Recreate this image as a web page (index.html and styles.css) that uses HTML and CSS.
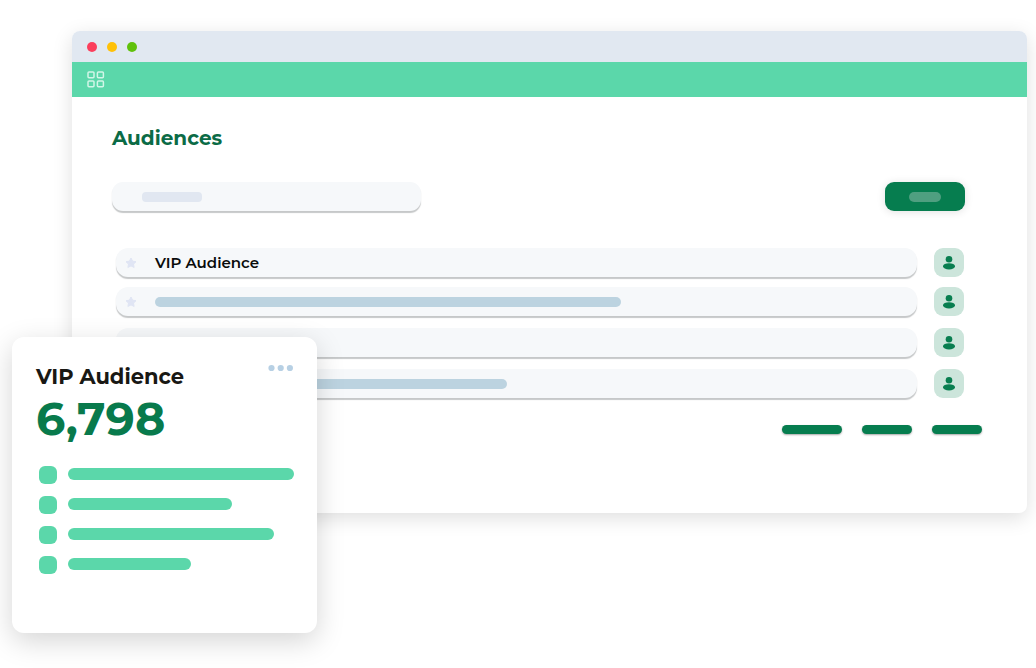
FILE: index.html
```html
<!DOCTYPE html>
<html lang="en">
<head>
<meta charset="utf-8">
<meta name="viewport" content="width=device-width, initial-scale=1">
<title>Audiences</title>
<link rel="stylesheet" href="styles.css">
</head>
<body>
<svg class="defs" aria-hidden="true">
  <symbol id="person" viewBox="0 0 14 16"><circle cx="7" cy="4.200" r="3.300"/><ellipse cx="7" cy="11.300" rx="6" ry="3.100"/></symbol>
  <symbol id="star" viewBox="0 0 12 12"><path d="M6 1 7.600 4.200l3.400.5-2.500 2.400.6 3.300L6 8.900l-3.100 1.500.6-3.300L1 4.700l3.400-.5z" stroke-linejoin="round"/></symbol>
</svg>
<main class="scene">
  <section class="window">
    <header class="titlebar">
      <span class="light light-close"></span>
      <span class="light light-min"></span>
      <span class="light light-max"></span>
    </header>
    <nav class="toolbar">
      <button class="icon-button" type="button" aria-label="Apps">
        <svg width="18" height="18" viewBox="0 0 18 18" fill="none" stroke="currentColor" stroke-width="1.500"><rect x="1" y="1" width="6" height="5.800" rx="1"/><rect x="10.400" y="1" width="6" height="5.800" rx="1"/><rect x="1" y="10" width="6" height="5.800" rx="1"/><rect x="10.400" y="10" width="6" height="5.800" rx="1"/></svg>
      </button>
    </nav>
    <div class="content">
      <h1 class="heading">Audiences</h1>
      <div class="actions">
        <label class="search"><span class="search-hint"></span><input class="search-input" type="text" aria-label="Search audiences"></label>
        <button class="create" type="button" aria-label="Create audience"><span class="create-label"></span></button>
      </div>
      <ul class="rows">
        <li class="row row-starred">
          <div class="row-body"><svg class="star"><use href="#star"/></svg><span class="row-name">VIP Audience</span></div>
          <button class="person" type="button" aria-label="Members"><svg class="person-icon"><use href="#person"/></svg></button>
        </li>
        <li class="row row-starred">
          <div class="row-body"><svg class="star"><use href="#star"/></svg><span class="row-bar" style="width:59.500%"></span></div>
          <button class="person" type="button" aria-label="Members"><svg class="person-icon"><use href="#person"/></svg></button>
        </li>
        <li class="row">
          <div class="row-body"></div>
          <button class="person" type="button" aria-label="Members"><svg class="person-icon"><use href="#person"/></svg></button>
        </li>
        <li class="row">
          <div class="row-body"><svg class="star"><use href="#star"/></svg><span class="row-bar" style="width:45%"></span></div>
          <button class="person" type="button" aria-label="Members"><svg class="person-icon"><use href="#person"/></svg></button>
        </li>
      </ul>
      <div class="pager">
        <button class="page page-wide" type="button" aria-label="Previous"></button>
        <button class="page" type="button" aria-label="Page"></button>
        <button class="page" type="button" aria-label="Next"></button>
      </div>
    </div>
  </section>
  <aside class="card">
    <div class="card-head">
      <h2 class="card-title">VIP Audience</h2>
      <button class="icon-button more" type="button" aria-label="More">
        <svg width="26" height="8" viewBox="0 0 26 8" fill="currentColor"><circle cx="3.500" cy="4" r="3.100"/><circle cx="12.700" cy="4" r="3.100"/><circle cx="21.900" cy="4" r="3.100"/></svg>
      </button>
    </div>
    <p class="count">6,798</p>
    <ul class="stats">
      <li class="stat"><span class="stat-box"></span><span class="stat-track"><span class="stat-bar" style="width:100%"></span></span></li>
      <li class="stat"><span class="stat-box"></span><span class="stat-track"><span class="stat-bar" style="width:72.500%"></span></span></li>
      <li class="stat"><span class="stat-box"></span><span class="stat-track"><span class="stat-bar" style="width:91%"></span></span></li>
      <li class="stat"><span class="stat-box"></span><span class="stat-track"><span class="stat-bar" style="width:54.500%"></span></span></li>
    </ul>
  </aside>
</main>
</body>
</html>
```
FILE: styles.css
```css
* { box-sizing: border-box; }
body { margin: 0; background: #fff; font-family: Montserrat, Inter, "Liberation Sans", sans-serif; }
h1, h2, p, ul { margin: 0; padding: 0; }
ul { list-style: none; }
button { border: 0; padding: 0; cursor: pointer; }
.defs { display: none; }
.scene { position: relative; min-height: 100vh; padding: 31px 9px 0 72px; overflow: hidden; }

.window { background: #fff; border-radius: 8px; box-shadow: 0 5px 20px rgba(0, 0, 0, .13); }
.titlebar { display: flex; align-items: center; gap: 10px; height: 31px; padding: 0 15px; background: #e1e8f1; border-radius: 8px 8px 0 0; }
.light { width: 10px; height: 10px; border-radius: 50%; }
.light-close { background: #fb3e5c; }
.light-min { background: #ffc107; }
.light-max { background: #60c10b; }
.toolbar { display: flex; align-items: center; height: 35px; padding: 0 15px; background: #5bd7aa; }
.icon-button { display: flex; background: none; color: #d2f6e8; }

.content { padding: 28px 62px 79px 40px; }
.heading { color: #0b6b46; font-size: 20px; font-weight: 700; line-height: 26px; }
.actions { display: flex; justify-content: space-between; align-items: center; margin-top: 31px; }
.search { display: flex; align-items: center; width: 309px; height: 29px; padding-left: 30px; background: #f6f8fa; border-radius: 11px; box-shadow: 0 2px 1px #c6c8c9; }
.search-hint { width: 60px; height: 10px; border-radius: 4px; background: #e1e7f1; }
.search-input { flex: 1; min-width: 0; border: 0; outline: 0; background: none; }
.create { display: flex; align-items: center; justify-content: center; width: 80px; height: 29px; border-radius: 9px; background: #067d4f; box-shadow: 0 1px 8px rgba(0, 0, 0, .12); }
.create-label { width: 32px; height: 10px; border-radius: 5px; background: #4f9f80; }

.rows { display: flex; flex-direction: column; gap: 12px; margin: 37px 1px 0 4px; }
.row { display: flex; gap: 17px; }
.row-starred + .row-starred { margin-top: -2px; }
.row-body { flex: 1; display: flex; align-items: center; height: 29px; padding: 0 9px; gap: 18px; background: #f6f8fa; border-radius: 12px; box-shadow: 0 2px 1px #c6c8c9; }
.star { flex: none; width: 12px; height: 12px; fill: #e0e5f4; stroke: #e0e5f4; }
.row-name { color: #090b0a; font-size: 15px; font-weight: 600; line-height: 20px; }
.row-bar { height: 10px; border-radius: 5px; background: #bcd3e0; }
.person { display: flex; align-items: center; justify-content: center; width: 30px; height: 29px; border-radius: 9px; background: #cce5db; }
.person-icon { width: 14px; height: 16px; fill: #087e50; }
.pager { display: flex; justify-content: flex-end; gap: 20px; margin: 27px -17px 0 0; }
.page { width: 50px; height: 9px; border-radius: 5px; background: #067d4f; box-shadow: 0 1px 2px rgba(0, 0, 0, .35); }
.page-wide { width: 60px; }

.card { position: absolute; left: 12px; top: 337px; width: 305px; padding: 25px 23px 59px 24px; background: #fff; border-radius: 12px; box-shadow: 0 8px 28px rgba(0, 0, 0, .17); }
.card-head { display: flex; justify-content: space-between; align-items: flex-start; }
.card-title { color: #191814; font-size: 21px; font-weight: 700; line-height: 30px; }
.more { padding: 2px 0; color: #b7d0e4; }
.count { color: #087a4c; font-size: 46px; font-weight: 700; line-height: 54px; }
.stats { display: flex; flex-direction: column; gap: 12px; margin: 20px 0 0 3px; }
.stat { display: flex; gap: 11px; }
.stat-box { width: 18px; height: 18px; border-radius: 6px; background: #5bd7aa; }
.stat-track { flex: 1; padding-top: 2px; }
.stat-bar { display: block; height: 12px; border-radius: 6px; background: #5bd7aa; }
```
